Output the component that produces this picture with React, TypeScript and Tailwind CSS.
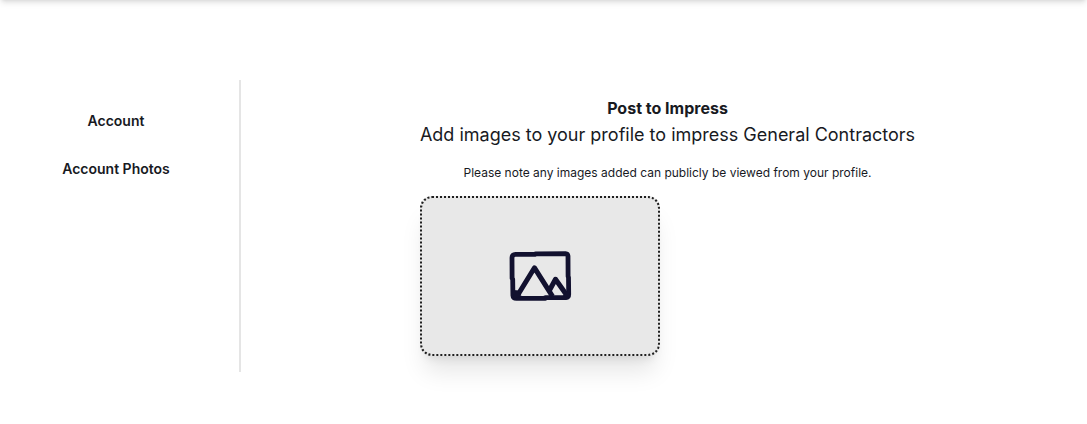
import React from "react";

const links = [
  { label: "Account", href: "#account" },
  { label: "Account Photos", href: "#photos" },
];

// hand drawn frame, the edges overlap a little
const ImageIcon = () => (
  <svg
    className="w-16 h-14"
    viewBox="0.5 -0.3 64 56"
    fill="none"
    stroke="#12112f"
    strokeLinejoin="round"
    aria-hidden="true"
  >
    <path
      d="M4.5 9.5 Q4.5 6 8 6 L28 6 L28 5.6 L58 5.4 Q60.3 5.6 60.5 8 L60.6 28 L61 29 L61.2 46 Q61.2 49 58.5 49.3 L38 49.4 L38 50 L9 50 Q5.6 50 5.4 47 L5.2 31 L4.6 30 Z"
      strokeWidth="4.8"
    />
    <path d="M9.5 48 L27 19.5 L45 48" strokeWidth="5" />
    <path d="M42 42 L48 31 L60 48" strokeWidth="5" />
    <path d="M5 40 L8 42 L10 42 L14 47 L6 51 Z" fill="#12112f" stroke="none" />
    <path d="M55 48 L62 40 L62 49 Z" fill="#12112f" stroke="none" />
  </svg>
);

const Sidebar = () => (
  <nav className="w-58 shrink-0 flex flex-col items-center pt-[17px]">
    {links.map(({ label, href }) => (
      <a
        key={label}
        href={href}
        className="h-12 flex items-center text-sm font-semibold"
      >
        {label}
      </a>
    ))}
  </nav>
);

const AccountPhotos = () => (
  <main className="grow flex justify-center py-4">
    <div className="flex flex-col">
      <h1 className="text-center text-base font-bold">Post to Impress</h1>
      <h2 className="text-center text-lg leading-[30px]">
        Add images to your profile to impress General Contractors
      </h2>
      <p className="text-center text-xs leading-[18px] my-3.5">
        Please note any images added can publicly be viewed from your profile.
      </p>
      <button
        type="button"
        aria-label="Add image"
        className="w-60 h-40 flex items-center justify-center rounded-xl border-2 border-dotted border-[#1f1f1f] bg-[#e8e8e8] shadow-xl"
      >
        <ImageIcon />
      </button>
    </div>
  </main>
);

const App = () => {
  return (
    <div className="min-h-screen flex flex-col bg-white font-[Inter,sans-serif] text-[#181a1f]">
      <header className="h-16 -mt-16 bg-white shadow-md" />
      <div className="flex pt-20">
        <Sidebar />
        <div className="w-4 shrink-0 flex justify-center">
          <div className="w-0.5 bg-[#e5e5e5]" />
        </div>
        <AccountPhotos />
      </div>
    </div>
  );
};

export default App;
